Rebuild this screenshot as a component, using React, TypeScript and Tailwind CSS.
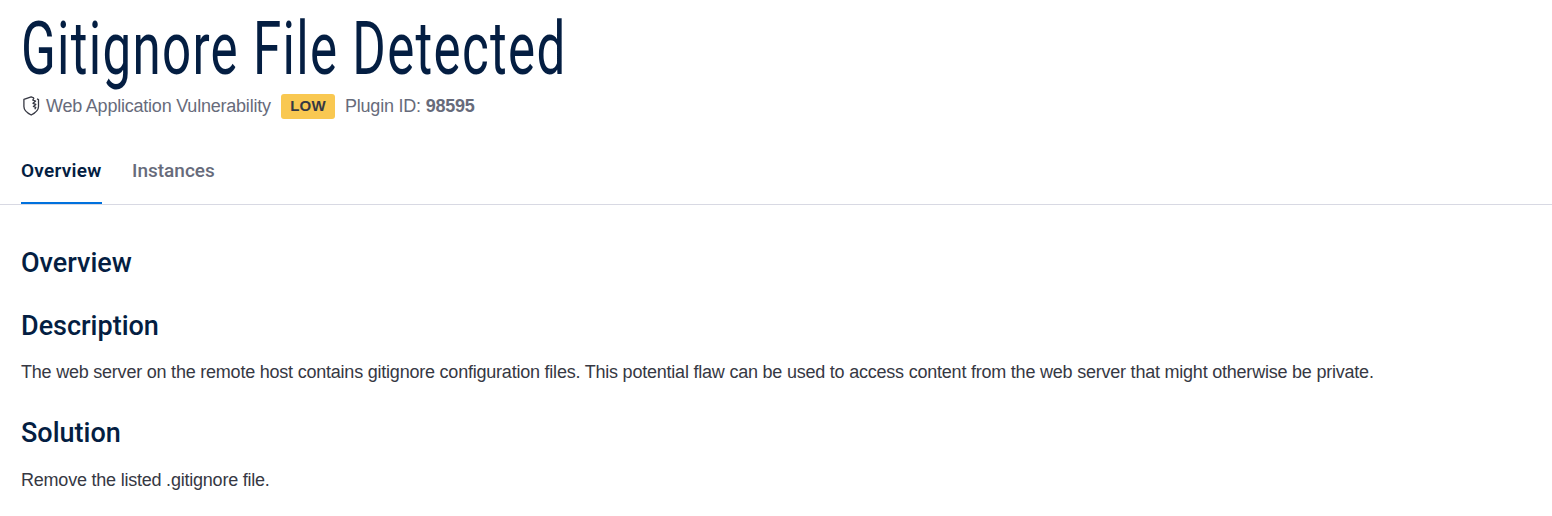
import type { ReactNode } from "react";

function ShieldIcon() {
  return (
    <svg className="ml-0.5 h-5 w-[17px] shrink-0" viewBox="0 0 17 20" fill="none" stroke="#363843" strokeWidth="1.3" strokeLinejoin="round">
      <path d="M11 2 8.2 0.8 0.9 3.4V10.6C0.9 14.6 4 17 8.2 19C12.4 17 15.5 14.6 15.5 10.6V3.6L14 2.9" />
      <path d="M11 2 9.8 4.1 12.6 5 10 7.3 12.8 8.4 10.4 10.5 12.8 11.4 11.8 13.2" />
    </svg>
  );
}

function Tab({ active, children }: { active?: boolean; children: ReactNode }) {
  return (
    <button
      className={
        active
          ? "h-[54px] w-[81px] border-b-2 border-[#0071dd] pb-[10px] text-left text-[19px] font-semibold tracking-[0.25px] whitespace-nowrap text-[#041e42]"
          : "h-[54px] border-b-2 border-transparent pb-[10px] text-left text-[19px] font-medium whitespace-nowrap text-[#676b7b]"
      }
    >
      {children}
    </button>
  );
}

function Heading({ children }: { children: ReactNode }) {
  return <h2 className="h-8 text-[27px] leading-8 font-medium whitespace-nowrap text-[#041e42]">{children}</h2>;
}

export default function App() {
  return (
    <main className="h-[516px] overflow-hidden bg-white font-['Roboto',sans-serif]">
      <header className="px-[21px]">
        <h1 className="h-[93px] w-max origin-left scale-x-[0.69] text-[74px] leading-[98px] font-[430] tracking-[1.9px] whitespace-nowrap text-[#041e42]">
          Gitignore File Detected
        </h1>
        <div className="flex h-[26px] items-center font-['Liberation_Sans',sans-serif] text-[18px] tracking-[-0.22px] whitespace-nowrap text-[#676b7b]">
          <ShieldIcon />
          <span className="ml-1.5 w-[235px]">Web Application Vulnerability</span>
          <span className="mr-[10px] flex h-[25px] w-[54px] items-center justify-center rounded-[3px] bg-[#f9c851] pt-px font-['Liberation_Sans',sans-serif] text-[15px] font-bold tracking-[0.2px] text-[#363843]">
            LOW
          </span>
          <span>
            Plugin ID: <strong>98595</strong>
          </span>
        </div>
      </header>
      <nav className="mt-[31px] flex h-[55px] gap-[30px] border-b border-[#d8d9e3] px-[21px]">
        <Tab active>Overview</Tab>
        <Tab>Instances</Tab>
      </nav>
      <section className="px-[21px] pt-[42px] text-[#363843]">
        <Heading>Overview</Heading>
        <div className="mt-[31px]">
          <Heading>Description</Heading>
          <p className="mt-[17px] font-['Liberation_Sans',sans-serif] text-[18px] leading-[27px] tracking-[-0.22px] whitespace-nowrap">
            The web server on the remote host contains gitignore configuration files. This potential flaw can be used to access content from the web server that might otherwise be private.
          </p>
        </div>
        <div className="mt-[31px]">
          <Heading>Solution</Heading>
          <p className="mt-[18px] font-['Liberation_Sans',sans-serif] text-[18px] leading-[27px] tracking-[-0.22px] whitespace-nowrap">
            Remove the listed .gitignore file.
          </p>
        </div>
      </section>
    </main>
  );
}
